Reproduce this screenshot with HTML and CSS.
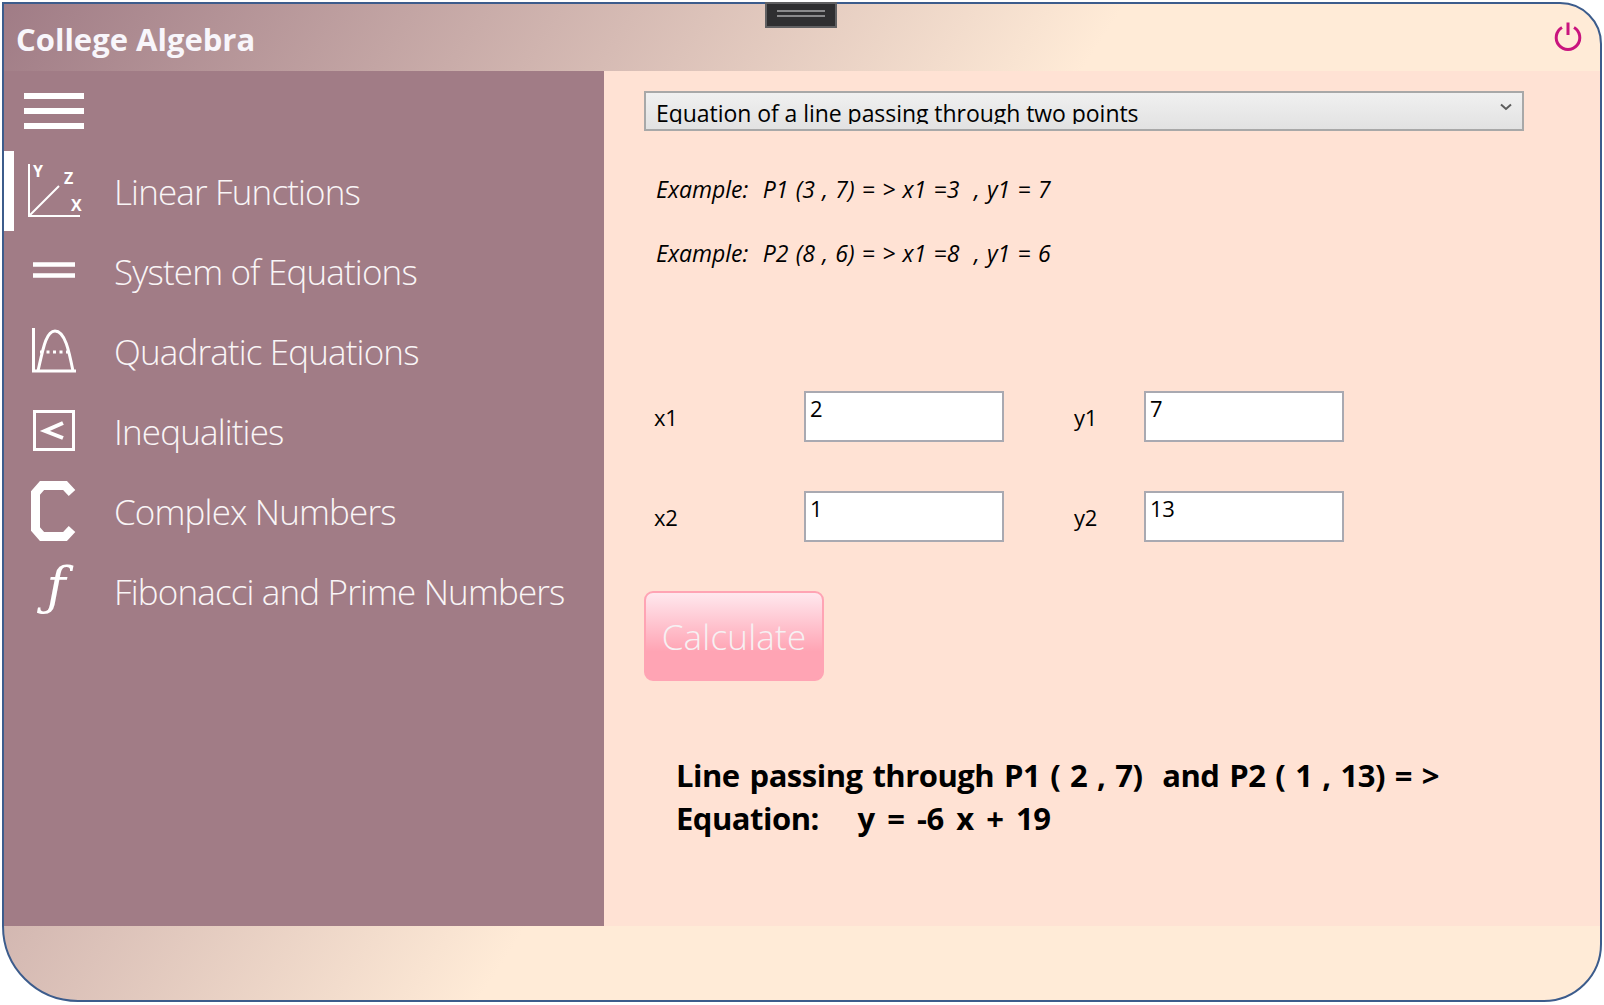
FILE: index.html
```html
<!DOCTYPE html>
<html lang="en">
<head>
  <meta charset="UTF-8"/>
  <title>College Algebra</title>
  <link rel="stylesheet" href="styles.css">
</head>
<body>
  <div class="window">
    <div class="titlebar">
      <h1>College Algebra</h1>
      <svg class="power" viewBox="0 0 30 30">
        <path d="M9 6.500 A11.8 11.8 0 1 0 21 6.500" fill="none" stroke="#c9147e" stroke-width="3"/>
        <path d="M15 1.500 V14" fill="none" stroke="#c9147e" stroke-width="3"/>
      </svg>
    </div>

    <div class="main">
      <div class="sidebar">
        <div class="hamburger"><span></span><span></span><span></span></div>

        <a class="nav-item active" href="#">
          <svg class="nav-icon" viewBox="0 0 60 60">
            <path d="M5 3 V55 H56 M5 55 L35 25" fill="none" stroke="#fff" stroke-width="2"/>
            <text class="axis" x="9" y="16">Y</text>
            <text class="axis" x="40" y="23">Z</text>
            <text class="axis" x="47" y="50">X</text>
          </svg>
          <span>Linear Functions</span>
        </a>
        <a class="nav-item" href="#">
          <svg class="nav-icon" viewBox="0 0 60 60">
            <path d="M9 23.500 H51 M9 34.500 H51" fill="none" stroke="#fff" stroke-width="4.500"/>
          </svg>
          <span>System of Equations</span>
        </a>
        <a class="nav-item" href="#">
          <svg class="nav-icon" viewBox="0 0 60 60">
            <path d="M9.500 7 V50 H52" fill="none" stroke="#fff" stroke-width="3"/>
            <path d="M14 50 C19 28 22 10 31 10 C41 10 45 30 49 50" fill="none" stroke="#fff" stroke-width="3"/>
            <path d="M16 31 H48" fill="none" stroke="#fff" stroke-width="3" stroke-dasharray="3 3.500"/>
          </svg>
          <span>Quadratic Equations</span>
        </a>
        <a class="nav-item" href="#">
          <svg class="nav-icon" viewBox="0 0 60 60">
            <rect x="10.500" y="10.500" width="39" height="38" fill="none" stroke="#fff" stroke-width="3"/>
            <path d="M39 22 L21 30 L39 37" fill="none" stroke="#fff" stroke-width="4"/>
          </svg>
          <span>Inequalities</span>
        </a>
        <a class="nav-item" href="#">
          <svg class="nav-icon" viewBox="0 0 60 60">
            <path d="M48 12 L41 4.500 H18 L11.500 12 V48 L18 55.500 H41 L48 48" fill="none" stroke="#fff" stroke-width="9"/>
          </svg>
          <span>Complex Numbers</span>
        </a>
        <a class="nav-item" href="#">
          <span class="nav-icon func">ƒ</span>
          <span>Fibonacci and Prime Numbers</span>
        </a>
      </div>

      <div class="content">
        <div class="dropdown">
          <div class="dropdown-text">Equation of a line passing through two points</div>
          <svg class="chevron" viewBox="0 0 12 8">
            <path d="M1 1.500 L6 6 L11 1.500" fill="none" stroke="#5c5c5c" stroke-width="2"/>
          </svg>
        </div>

        <p class="example">Example:&nbsp; P1 (3 , 7) = &gt; x1 =3 &nbsp;, y1 = 7</p>
        <p class="example">Example:&nbsp; P2 (8 , 6) = &gt; x1 =8 &nbsp;, y1 = 6</p>

        <div class="form-grid">
          <label for="x1">x1</label>
          <input type="text" id="x1" value="2"/>
          <label for="y1">y1</label>
          <input type="text" id="y1" value="7"/>
          <label for="x2">x2</label>
          <input type="text" id="x2" value="1"/>
          <label for="y2">y2</label>
          <input type="text" id="y2" value="13"/>
        </div>

        <button class="calc-btn">Calculate</button>

        <div class="result">
          Line passing through P1 ( 2 , 7) &nbsp;and P2 ( 1 , 13) = &gt;<br>
          Equation: &nbsp; <span class="formula">y = -6 x + 19</span>
        </div>
      </div>
    </div>

    <div class="footer"></div>
  </div>

  <div class="grip"><span></span><span></span></div>
</body>
</html>
```

FILE: styles.css
```css
* {
  box-sizing: border-box;
  padding: 0;
  margin: 0;
}

html, body {
  height: 100%;
  background: #fff;
  overflow: hidden;
}

body {
  font-family: 'Open Sans', 'Noto Sans', sans-serif;
  padding: 2px 2px 3px 2px;
  position: relative;
}

.window {
  width: 1600px;
  height: 1000px;
  display: flex;
  flex-direction: column;
  border: 2px solid #3c5c8c;
  border-radius: 0 42px 58px 76px;
  overflow: hidden;
  background: linear-gradient(123deg, #a07c86 0%, #ffebd7 50%);
}

.grip {
  position: absolute;
  top: 2px;
  left: 765px;
  width: 72px;
  height: 26px;
  background: #2f2f31;
  border: 2px solid #606062;
  display: flex;
  flex-direction: column;
  justify-content: center;
  align-items: center;
  gap: 3px;
  padding-bottom: 4px;
}

.grip span {
  display: block;
  width: 48px;
  height: 2px;
  background: #8a8a8c;
}

.titlebar {
  height: 67px;
  display: flex;
  align-items: center;
  justify-content: space-between;
  padding: 0 17px 0 12px;
  flex-shrink: 0;
}

.titlebar h1 {
  font-size: 31px;
  font-weight: 700;
  color: #f8f6fb;
  letter-spacing: 0;
  padding-top: 2px;
}

.power {
  width: 30px;
  height: 30px;
  margin-bottom: 4px;
}

.main {
  flex: 1;
  display: flex;
  min-height: 0;
}

.footer {
  height: 74px;
  flex-shrink: 0;
}

.sidebar {
  width: 600px;
  background: #a17c86;
  flex-shrink: 0;
}

.hamburger {
  height: 80px;
  padding: 22px 0 0 20px;
  display: flex;
  flex-direction: column;
  gap: 9px;
}

.hamburger span {
  display: block;
  width: 60px;
  height: 6px;
  background: #fff;
}

.nav-item {
  display: flex;
  align-items: center;
  height: 80px;
  padding-left: 20px;
  gap: 30px;
  font-size: 35px;
  font-weight: 300;
  color: #f9f5f6;
  text-decoration: none;
  white-space: nowrap;
  letter-spacing: -0.85px;
  position: relative;
}

.nav-item.active::before {
  content: "";
  position: absolute;
  left: 0;
  top: 0;
  width: 10px;
  height: 80px;
  background: #fff;
}

.nav-icon {
  width: 60px;
  height: 60px;
  flex-shrink: 0;
  overflow: visible;
}

.axis {
  font-size: 16px;
  font-weight: 700;
  fill: #fff;
  font-family: 'Open Sans', sans-serif;
}

.func {
  font-family: 'DejaVu Serif', serif;
  font-style: italic;
  font-size: 52px;
  line-height: 50px;
  text-align: center;
  padding-left: 4px;
  color: #fff;
  letter-spacing: 0;
}

.content {
  flex: 1;
  background: #ffe2d4;
  padding: 20px 0 0 40px;
  color: #000;
}

.dropdown {
  width: 880px;
  height: 40px;
  display: flex;
  justify-content: space-between;
  border: 2px solid #a8a8a8;
  background: linear-gradient(#f0f0f0, #e2e2e2);
  padding: 0 10px 0 10px;
  overflow: hidden;
}

/* the reference cuts the descenders off here too */
.dropdown-text {
  font-size: 23px;
  line-height: 40px;
  height: 31px;
  overflow: hidden;
  white-space: nowrap;
  letter-spacing: -0.05px;
}

.chevron {
  width: 12px;
  height: 8px;
  margin-top: 10px;
}

.example {
  font-size: 23px;
  font-style: italic;
  margin: 0 0 0 12px;
  height: 64px;
  line-height: 64px;
  letter-spacing: 0;
  word-spacing: 1.3px;
  white-space: nowrap;
}

.dropdown + .example {
  margin-top: 26px;
}

.form-grid {
  display: grid;
  grid-template-columns: 150px 200px 140px 200px;
  grid-auto-rows: 51px;
  row-gap: 49px;
  margin-top: 106px;
  align-items: center;
  padding-left: 10px;
}

.form-grid label {
  font-size: 22px;
  letter-spacing: -0.2px;
  padding-top: 1px;
}

.form-grid label:nth-of-type(2n) {
  padding-left: 70px;
}

.form-grid input {
  width: 200px;
  height: 51px;
  border: 2px solid #a9a9b1;
  background: #fff;
  font-family: inherit;
  font-size: 22px;
  padding: 0 0 17px 4px;
  color: #000;
  outline: none;
  letter-spacing: -0.4px;
}

.calc-btn {
  display: block;
  width: 180px;
  height: 90px;
  margin: 49px 0 0 0;
  padding-top: 1px;
  border: 2px solid #ffa4b4;
  border-radius: 9px;
  background: linear-gradient(#ffe8ee 0%, #ffa4b4 68%);
  color: #f6f1f3;
  font-family: inherit;
  font-size: 35px;
  font-weight: 300;
  letter-spacing: 0.2px;
}

.result {
  margin: 73px 0 0 32px;
  font-size: 31px;
  font-weight: 700;
  line-height: 43px;
  letter-spacing: -0.5px;
  word-spacing: 2.3px;
  white-space: nowrap;
}

.formula {
  word-spacing: 5px;
  padding-left: 9px;
}
```
